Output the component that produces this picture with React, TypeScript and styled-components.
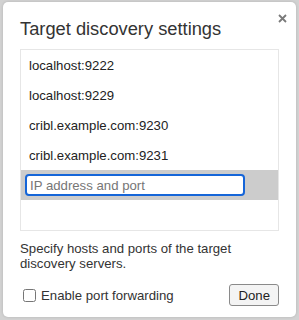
import styled, { createGlobalStyle } from 'styled-components';

const hosts = [
  'localhost:9222',
  'localhost:9229',
  'cribl.example.com:9230',
  'cribl.example.com:9231',
];

const GlobalStyle = createGlobalStyle`
  body {
    margin: 0;
    background: #d2d2d2;
    font-family: 'Liberation Sans', Arial, sans-serif;
  }
`;

const App = () => {
  return (
    <>
      <GlobalStyle />
      <Page>
        <Dialog>
          <CloseButton aria-label='Close'>
            <svg width='9' height='9' viewBox='0 0 9 9'>
              <path d='M1 1L8 8M8 1L1 8' stroke='#7a7a7a' strokeWidth='1.8' />
            </svg>
          </CloseButton>
          <Title>Target discovery settings</Title>
          <HostList>
            {hosts.map((host) => (
              <HostItem key={host}>{host}</HostItem>
            ))}
            <EditRow>
              <HostInput placeholder='IP address and port' autoFocus />
            </EditRow>
          </HostList>
          <Description>
            Specify hosts and ports of the target discovery servers.
          </Description>
          <Footer>
            <CheckLabel>
              <CheckBox type='checkbox' />
              Enable port forwarding
            </CheckLabel>
            <DoneButton>Done</DoneButton>
          </Footer>
        </Dialog>
      </Page>
    </>
  );
};

const Page = styled.div`
  box-sizing: border-box;
  width: 299px;
  height: 320px;
  padding: 2px 3px 3px 3px;
`;

const Dialog = styled.div`
  position: relative;
  box-sizing: border-box;
  height: 100%;
  padding: 16px 17px 0 17px;

  display: flex;
  flex-direction: column;

  background-color: #ffffff;
  border-radius: 5px;
  box-shadow: 0 0 3px rgba(0, 0, 0, 0.15);
`;

const CloseButton = styled.div`
  position: absolute;
  top: 10px;
  right: 8px;

  display: flex;
  justify-content: center;
  align-items: center;
  width: 12px;
  height: 12px;
`;

const Title = styled.h1`
  margin: 0 0 9px 0;
  font-size: 18.3px;
  font-weight: 400;
  line-height: 22px;
  color: #333333;
`;

const HostList = styled.div`
  height: 180px;
  border: 1px solid #e6e6e6;
`;

const HostItem = styled.div`
  height: 30px;
  padding-left: 8px;
  display: flex;
  align-items: center;

  font-size: 13.2px;
  color: #222222;
`;

const EditRow = styled.div`
  height: 30px;
  display: flex;
  align-items: center;
  padding-left: 4px;
  background-color: #cccccc;
`;

const HostInput = styled.input`
  box-sizing: border-box;
  width: 220px;
  height: 22px;
  padding: 0 3px;

  border: 2px solid #1565d8;
  border-radius: 4px;
  outline: none;
  background-color: #ffffff;

  font-family: 'Liberation Sans', Arial, sans-serif;
  font-size: 13.2px;
  color: #222222;

  &::placeholder {
    color: #767676;
  }
`;

const Description = styled.p`
  margin: 10px 0 0 0;
  font-size: 13.2px;
  line-height: 15px;
  color: #333333;
`;

const Footer = styled.div`
  margin-top: 13px;
  display: flex;
  justify-content: space-between;
  align-items: center;
`;

const CheckLabel = styled.label`
  display: flex;
  align-items: center;
  gap: 5px;
  font-size: 13.2px;
  color: #333333;
`;

const CheckBox = styled.input`
  margin: 0 0 0 3px;
  width: 13px;
  height: 13px;
`;

const DoneButton = styled.button`
  height: 22px;
  padding: 0 8px;

  border: 1px solid #8a8a8a;
  border-radius: 3px;
  background-color: #f4f4f4;

  font-family: 'Liberation Sans', Arial, sans-serif;
  font-size: 13.2px;
  color: #222222;
`;

export default App;
